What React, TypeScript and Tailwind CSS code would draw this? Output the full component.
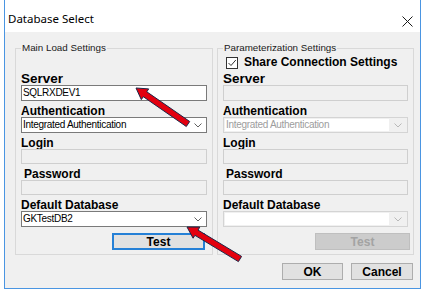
import React from "react";

type Pt = [number, number];

function arrowPoints(tip: Pt, tail: Pt, shaftHw: number, headHw: number, headLen: number): string {
  const dx = tip[0] - tail[0];
  const dy = tip[1] - tail[1];
  const len = Math.hypot(dx, dy);
  const ux = dx / len;
  const uy = dy / len;
  const nx = -uy;
  const ny = ux;
  const bx = tip[0] - ux * headLen;
  const by = tip[1] - uy * headLen;
  const pts: Pt[] = [
    [tail[0] + nx * shaftHw, tail[1] + ny * shaftHw],
    [bx + nx * shaftHw, by + ny * shaftHw],
    [bx + nx * headHw, by + ny * headHw],
    [tip[0], tip[1]],
    [bx - nx * headHw, by - ny * headHw],
    [bx - nx * shaftHw, by - ny * shaftHw],
    [tail[0] - nx * shaftHw, tail[1] - ny * shaftHw],
  ];
  return pts.map((p) => `${p[0].toFixed(1)},${p[1].toFixed(1)}`).join(" ");
}

function Chevron({ color }: { color: string }) {
  return (
    <svg width="8" height="5" viewBox="0 0 8 5" className="block">
      <path d="M0.5 0.5 L4 4 L7.5 0.5" fill="none" stroke={color} strokeWidth="1" />
    </svg>
  );
}

function Label({ children, indent, big }: { children: React.ReactNode; indent?: boolean; big?: boolean }) {
  return (
    <div
      className={`h-[12px] leading-[12px] ${big ? "text-[13.5px]" : "text-[12px]"} font-bold text-black whitespace-nowrap ${
        indent ? "pl-[3px]" : ""
      }`}
    >
      {children}
    </div>
  );
}

const inputText = "text-[10px] tracking-[-0.3px] leading-[14px] whitespace-nowrap";

function TextBox({ value, disabled, h }: { value?: string; disabled?: boolean; h: "15" | "16" }) {
  return (
    <div
      className={`${h === "16" ? "h-[16px]" : "h-[15px]"} w-full border flex items-center px-[1px] ${
        disabled ? "bg-[#f0f0f0] border-[#cfcfcf]" : "bg-white border-[#7a7a7a]"
      }`}
    >
      <span className={`${inputText} text-black`}>{value}</span>
    </div>
  );
}

function Combo({ value, disabled }: { value?: string; disabled?: boolean }) {
  if (disabled) {
    return (
      <div className="h-[16px] w-full border border-[#d4d4d4] bg-[#f0f0f0] flex items-stretch p-[1px]">
        <div className="flex-1 bg-white flex items-center pl-[1px]">
          <span className={`${inputText} text-[#9d9d9d]`}>{value}</span>
        </div>
        <div className="w-[17px] flex items-center justify-center">
          <Chevron color="#b8b8b8" />
        </div>
      </div>
    );
  }
  return (
    <div className="h-[16px] w-full border border-[#7a7a7a] bg-white flex items-center pl-[1px]">
      <span className={`${inputText} text-black flex-1`}>{value}</span>
      <div className="w-[16px] flex items-center justify-center">
        <Chevron color="#606060" />
      </div>
    </div>
  );
}

function Group({ title, children, w }: { title: string; children: React.ReactNode; w: string }) {
  return (
    <div className={`relative h-[207px] ${w} border border-[#d9d9d9]`}>
      <span className="absolute left-[5px] top-[-7px] px-[1px] bg-[#f0f0f0] text-[9.8px] leading-[12px] text-[#1a1a1a] whitespace-nowrap">
        {title}
      </span>
      <div className="flex flex-col px-[5px] h-full">{children}</div>
    </div>
  );
}

export default function App() {
  const a1 = arrowPoints([136, 88], [188, 124], 3, 6.5, 11);
  const a2 = arrowPoints([187, 227], [240, 259], 3, 6.5, 11);
  return (
    <div className="relative w-[428px] h-[294px] bg-white overflow-hidden font-['Liberation_Sans',Arial,sans-serif]">
      <div className="ml-[4px] w-[417px] h-[289px] border border-t-0 border-[#4a95e2] flex flex-col bg-[#f0f0f0]">
        {/* Title bar */}
        <div className="h-[32px] bg-white flex items-start justify-between pl-[3px] pr-[7px]">
          <span className="pt-[11px] text-[11.5px] leading-[16px] text-black font-['Noto_Sans','Liberation_Sans',sans-serif]">
            Database Select
          </span>
          <svg width="11" height="11" viewBox="0 0 11 11" className="mt-[16px]">
            <path d="M0.5 0.5 L10.5 10.5 M10.5 0.5 L0.5 10.5" stroke="#1a1a1a" strokeWidth="1" />
          </svg>
        </div>

        {/* Body */}
        <div className="flex flex-col flex-1">
          <div className="flex mt-[16px] ml-[10px] gap-[4px]">
            <Group title="Main Load Settings" w="w-[198px]">
              <div className="mt-[24px]">
                <Label big>Server</Label>
              </div>
              <TextBox value="SQLRXDEV1" h="16" />
              <div className="mt-[4px]">
                <Label>Authentication</Label>
              </div>
              <Combo value="Integrated Authentication" />
              <div className="mt-[4px]">
                <Label>Login</Label>
              </div>
              <TextBox disabled h="15" />
              <div className="mt-[4px]">
                <Label indent>Password</Label>
              </div>
              <TextBox disabled h="15" />
              <div className="mt-[4px]">
                <Label>Default Database</Label>
              </div>
              <Combo value="GKTestDB2" />
              <div className="mt-[6px] self-end mr-[2px] w-[93px] h-[17px] border-2 border-[#2580d6] bg-[#e1e1e1] flex items-center justify-center text-[12px] font-bold leading-[12px] text-black">
                Test
              </div>
            </Group>

            <Group title="Parameterization Settings" w="w-[197px]">
              <div className="mt-[7px] h-[13px] flex items-center pl-[3px]">
                <div className="w-[12px] h-[12px] border border-[#333333] bg-white flex items-center justify-center">
                  <svg width="10" height="10" viewBox="0 0 10 10">
                    <path d="M1.5 5 L4 7.5 L8.8 2" fill="none" stroke="#333333" strokeWidth="1" />
                  </svg>
                </div>
                <span className="ml-[6px] text-[12px] font-bold leading-[13px] text-black whitespace-nowrap">
                  Share Connection Settings
                </span>
              </div>
              <div className="mt-[4px]">
                <Label big>Server</Label>
              </div>
              <TextBox disabled h="16" />
              <div className="mt-[4px]">
                <Label>Authentication</Label>
              </div>
              <Combo value="Integrated Authentication" disabled />
              <div className="mt-[4px]">
                <Label>Login</Label>
              </div>
              <TextBox disabled h="15" />
              <div className="mt-[4px]">
                <Label indent>Password</Label>
              </div>
              <TextBox disabled h="15" />
              <div className="mt-[4px]">
                <Label>Default Database</Label>
              </div>
              <Combo disabled />
              <div className="mt-[6px] self-end mr-[-2px] w-[95px] h-[17px] border border-[#bfbfbf] bg-[#cccccc] flex items-center justify-center text-[12px] font-bold leading-[12px] text-[#a3a3a3]">
                Test
              </div>
            </Group>
          </div>

          <div className="flex justify-end gap-[8px] pr-[7px] mt-[8px]">
            <div className="w-[61px] h-[17px] border border-[#adadad] bg-[#e1e1e1] flex items-center justify-center text-[12px] font-bold leading-[12px] text-black">
              OK
            </div>
            <div className="w-[62px] h-[17px] border border-[#adadad] bg-[#e1e1e1] flex items-center justify-center text-[12px] font-bold leading-[12px] text-black">
              Cancel
            </div>
          </div>
        </div>
      </div>

      <svg
        className="absolute left-0 top-0 pointer-events-none"
        width="428"
        height="294"
        viewBox="0 0 428 294"
      >
        <polygon points={a1} fill="#e3000f" stroke="#1c2748" strokeWidth="1" strokeLinejoin="round" />
        <polygon points={a2} fill="#e3000f" stroke="#1c2748" strokeWidth="1" strokeLinejoin="round" />
      </svg>
    </div>
  );
}
